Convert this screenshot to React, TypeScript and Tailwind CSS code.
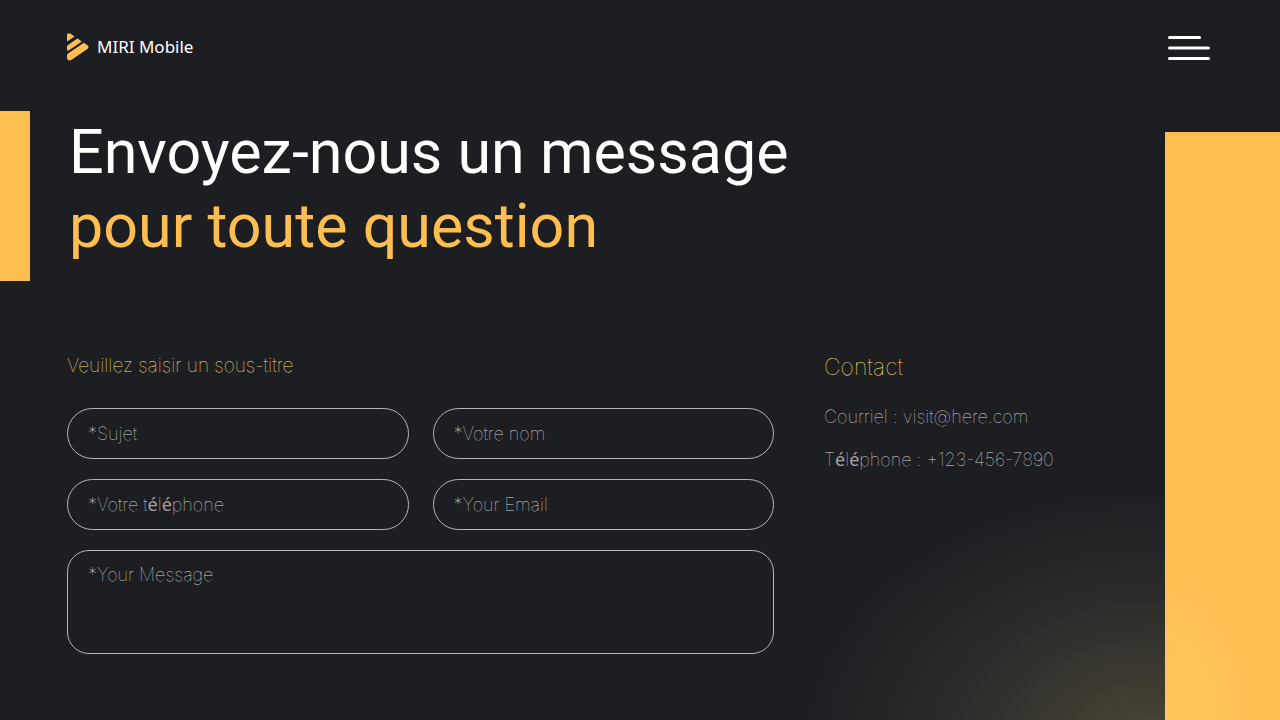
import type { ReactNode } from "react";

type FieldProps = {
  id: string;
  label: ReactNode;
  type?: string;
};

// the thin face has no accented e, so it is drawn in a regular weight
const E = () => <span className="font-['Noto_Sans',sans-serif] font-normal leading-none text-[#a2a3a5]">é</span>;

const Field = ({ id, label, type = "text" }: FieldProps) => {
  return (
    <div className="grid">
      <input
        id={id}
        type={type}
        placeholder=" "
        className="peer col-start-1 row-start-1 h-[51px] w-full rounded-full border border-[#b4b5b7] bg-transparent px-[21px] text-lg text-white outline-none"
      />
      <label
        htmlFor={id}
        className="invisible col-start-1 row-start-1 self-center justify-self-start pl-[21px] text-lg text-[#d4d5d7] peer-placeholder-shown:visible"
      >
        {label}
      </label>
    </div>
  );
};

const Logo = () => (
  <svg width="22" height="28" viewBox="0 0 22 28" fill="#ffbe50" aria-hidden="true">
    <path d="M0 8.4V2.2C0 .5 1.700-.4 3.200.5L7.600 3.500Z" />
    <path d="M0 17.400V14.200C0 13.100.5 12.300 1.400 11.700L10.400 5.500L14.800 8.400L2.400 16.900C1.400 17.600.6 17.800 0 17.400Z" />
    <path d="M0 24.800V22.800C0 21.700.5 20.900 1.400 20.300L16.900 9.800L20.400 12.200C21.900 13.200 21.900 14.900 20.400 15.900L4.600 26.700C2.500 28.100 0 27.300 0 24.800Z" />
  </svg>
);

const App = () => {
  return (
    <div className="flex min-h-screen flex-col bg-[#1d1e22] bg-[radial-gradient(350px_260px_at_90%_104%,#4d4833_0%,#3b3930_30%,#2a2b2a_60%,#1d1e22_100%)] font-['Inter',sans-serif] font-thin">
      <header className="flex h-[111px] items-start justify-between pl-[67px] pr-[70px] pt-[33px]">
        <a href="#" className="flex items-center gap-2 font-['Noto_Sans',sans-serif] text-[17px] leading-7 font-normal text-white">
          <Logo />
          MIRI Mobile
        </a>
        <button type="button" aria-label="Menu" className="mt-[3px]">
          <svg width="42" height="24" viewBox="0 0 42 24" fill="#fff">
            <rect width="33" height="3" rx="1.5" />
            <rect y="10.500" width="42" height="3" rx="1.5" />
            <rect y="21" width="42" height="3" rx="1.5" />
          </svg>
        </button>
      </header>

      <div className="flex flex-1">
        <div className="h-[170px] w-[30px] shrink-0 bg-[#ffbe50]" />

        <main className="flex-1 pl-[37px]">
          <h1 className="pl-[2px] pt-1 font-['Roboto',sans-serif] text-[61px] leading-[74px] font-normal text-white">
            Envoyez-nous un message
            <span className="block text-[#ffbe50]">pour toute question</span>
          </h1>

          <div className="mt-[88px] grid grid-cols-[707fr_341fr] gap-[50px]">
            <form>
              <h2 className="text-[19px] leading-[30px] text-[#ffe070]">Veuillez saisir un sous-titre</h2>
              <div className="mt-[27px] grid grid-cols-2 gap-x-6 gap-y-5">
                <Field id="subject" label="*Sujet" />
                <Field id="name" label="*Votre nom" />
                <Field id="phone" type="tel" label={<>*Votre t<E />l<E />phone</>} />
                <Field id="email" type="email" label="*Your Email" />
                <textarea
                  aria-label="Your Message"
                  placeholder="*Your Message"
                  className="col-span-2 h-[104px] resize-none rounded-[22px] border border-[#b4b5b7] bg-transparent px-[20px] py-[10px] text-lg text-white outline-none placeholder:text-[#d4d5d7]"
                />
              </div>
            </form>

            <section className="text-[#d4d5d7]">
              <h2 className="text-[23px] leading-8 text-[#ffe070]">Contact</h2>
              <p className="mt-5 text-lg">Courriel : visit@here.com</p>
              <p className="mt-[15px] text-lg">
                T<E />l<E />phone : +123-456-7890
              </p>
            </section>
          </div>
        </main>

        <div className="mt-[21px] w-[115px] shrink-0 bg-[#ffbe50] bg-[radial-gradient(110px_180px_at_0%_100%,#ffc65a_0%,#ffbe50_100%)]" />
      </div>
    </div>
  );
};

export default App;
